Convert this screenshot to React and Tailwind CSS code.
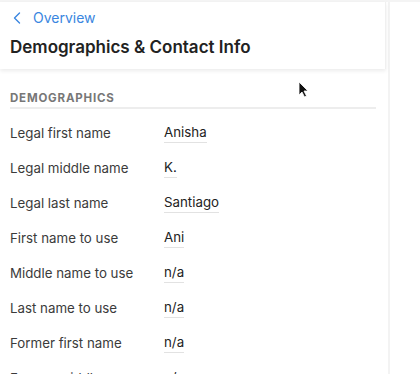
import React from "react";

const rows = [
  ["Legal first name", "Anisha"],
  ["Legal middle name", "K."],
  ["Legal last name", "Santiago"],
  ["First name to use", "Ani"],
  ["Middle name to use", "n/a"],
  ["Last name to use", "n/a"],
  ["Former first name", "n/a"],
  ["Former middle name", "n/a"],
];

export default function App() {
  return (
    <div
      className="relative w-[420px] h-[374px] overflow-hidden bg-white text-[#1f1f1f]"
      style={{ fontFamily: "Inter, 'Noto Sans', sans-serif" }}
    >
      <div className="h-[2px] bg-[#f4f4f4]" />
      <div className="flex">
        <div className="w-[390px] border-r-2 border-[#f3f3f3] min-h-[372px]">
          <div className="relative z-10 w-[386px] bg-white border-r border-[#f0f0f0] shadow-[0_2px_4px_rgba(0,0,0,0.08)] px-[10px] pt-[7px] pb-[11px]">
            <div className="flex items-center gap-[12px] text-[#3a86e0] text-[14px] leading-[18px]">
              <svg width="8" height="12" viewBox="0 0 8 12" fill="none" className="ml-[3px]">
                <path d="M6.5 1 L1.5 6 L6.5 11" stroke="#3a86e0" strokeWidth="1.4" strokeLinecap="round" strokeLinejoin="round" />
              </svg>
              <span>Overview</span>
            </div>
            <div className="mt-[9px] text-[17px] leading-[22px] font-semibold text-[#222]">
              Demographics &amp; Contact Info
            </div>
          </div>
          <div className="px-[10px] pt-[22px]">
            <div className="w-[366px] border-b-2 border-[#ededed] pb-[2px] text-[11.5px] leading-[14px] font-bold tracking-[0.07em] text-[#777]">
              DEMOGRAPHICS
            </div>
            <div className="mt-[6px] flex flex-col">
              {rows.map(([label, value]) => (
                <div key={label} className="flex h-[35px] items-center">
                  <div className="w-[154px] text-[13.3px] leading-[18px] text-[#3b3b3b]">{label}</div>
                  <div className="text-[13.3px] leading-[18px] text-[#222] border-b border-[#e2e2e2] pb-[1px]">{value}</div>
                </div>
              ))}
            </div>
          </div>
        </div>
      </div>
      <svg
        className="absolute left-[298px] top-[81px]"
        width="11"
        height="17"
        viewBox="0 0 11 17"
      >
        <path d="M1 1 L1 14 L4 11 L6.5 16 L8.5 15 L6 10 L10 10 Z" fill="#111" stroke="#fff" strokeWidth="0.8" />
      </svg>
    </div>
  );
}
